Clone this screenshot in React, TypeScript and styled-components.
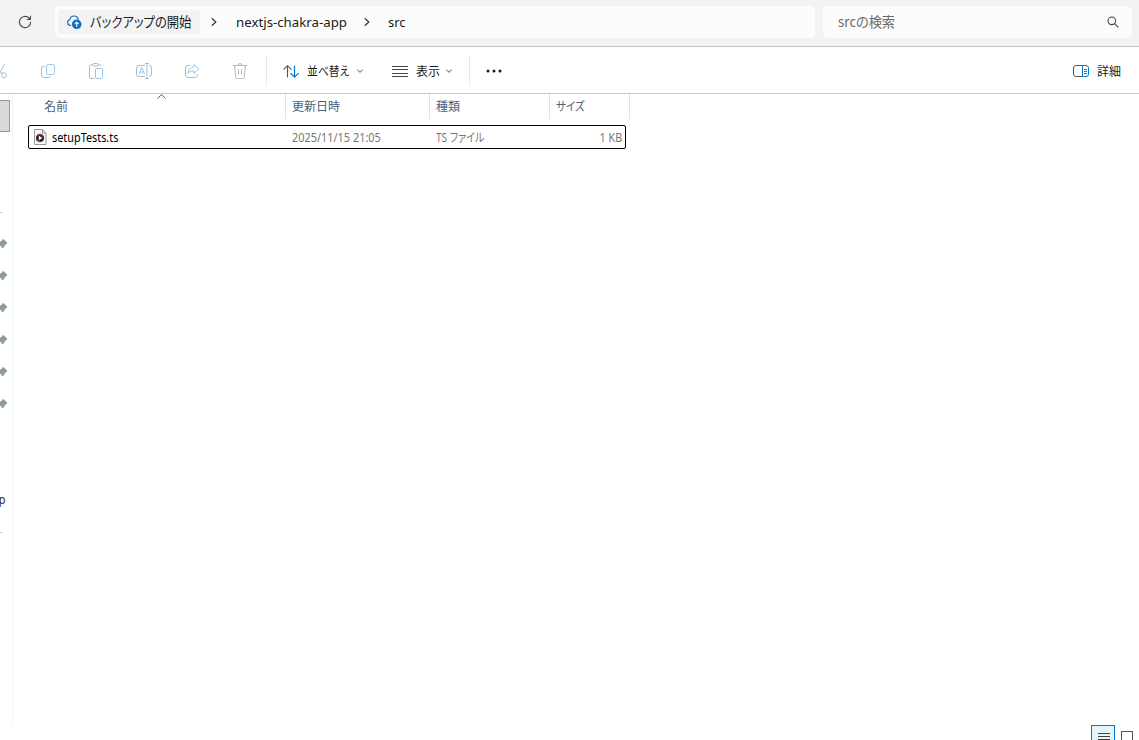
import React from "react";
import styled, { createGlobalStyle } from "styled-components";

const Global = createGlobalStyle`
  * { box-sizing: border-box; }
  body { margin: 0; background: #fff; overflow: hidden; }
  svg { display: block; flex: none; overflow: visible; }
`;

const Window = styled.div`
  width: 1139px;
  height: 740px;
  display: flex;
  flex-direction: column;
  overflow: hidden;
  background: #fff;
  color: #1b1b1b;
  font-family: "Noto Sans", "Noto Sans CJK JP", sans-serif;
  font-size: 12px;
`;

const Text = styled.span<{ $size?: number; $color?: string; $track?: number; $stretch?: number; $kana?: boolean; $end?: boolean }>`
  display: inline-block;
  white-space: nowrap;
  line-height: 20px;
  font-size: ${(p) => p.$size ?? 12}px;
  color: ${(p) => p.$color ?? "#1b1b1b"};
  letter-spacing: ${(p) => p.$track ?? 0}px;
  transform: scaleX(${(p) => p.$stretch ?? 1});
  transform-origin: ${(p) => (p.$end ? "right" : "left")} center;
  font-feature-settings: ${(p) => (p.$kana ? '"palt"' : "normal")};
`;

const AddressBar = styled.header`
  height: 47px;
  flex: none;
  display: flex;
  align-items: flex-start;
  padding: 6px 7px 0 0;
  background: #f3f3f3;
  border-bottom: 1px solid #c8c8c8;
`;

const RefreshButton = styled.div`
  width: 55px;
  height: 32px;
  padding: 9px 0 0 18px;
`;

const Field = styled.div<{ $width: number }>`
  width: ${(p) => p.$width}px;
  height: 32px;
  display: flex;
  align-items: center;
  border-radius: 5px;
  background: #fcfcfc;
`;

const Path = styled(Field)`
  margin-right: 8px;
  padding-left: 3px;
`;

const Search = styled(Field)`
  justify-content: space-between;
  padding: 0 13px 0 15px;
`;

const Chip = styled.div`
  width: 142px;
  height: 24px;
  display: flex;
  align-items: center;
  gap: 8px;
  padding-left: 8px;
  border-radius: 4px;
  background: #f3f3f3;
`;

const Crumb = styled.div<{ $width: number }>`
  width: ${(p) => p.$width}px;
  display: flex;
`;

const CrumbArrow = styled.div<{ $width: number }>`
  width: ${(p) => p.$width}px;
  padding-left: 11px;
`;

const Toolbar = styled.div`
  height: 47px;
  flex: none;
  display: flex;
  align-items: center;
  border-bottom: 1px solid #c8c8c8;
`;

const ToolIcons = styled.div`
  display: flex;
  align-items: center;
  gap: 32px;
  margin-left: -8px;
  padding-top: 2px;
  width: 274px;
`;

const Divider = styled.div`
  width: 1px;
  height: 31px;
  background: #e8e8e8;
`;

const MenuButton = styled.div<{ $left: number; $width: number }>`
  display: flex;
  align-items: center;
  margin-left: ${(p) => p.$left}px;
  width: ${(p) => p.$width}px;
  padding-top: 2px;
`;

const MenuLabel = styled.div<{ $width: number }>`
  width: ${(p) => p.$width}px;
  margin-left: 8px;
  padding-top: 2px;
  margin-bottom: 0;
  display: flex;
`;

const Details = styled.div`
  display: flex;
  align-items: center;
  gap: 8px;
  margin-left: auto;
  padding: 2px 18px 0 0;
`;

const DetailsLabel = styled.div`
  display: flex;
  padding-top: 2px;
`;

const Body = styled.div`
  flex: 1;
  display: flex;
  min-height: 0;
`;

const Sidebar = styled.nav`
  width: 13px;
  height: 630px;
  flex: none;
  overflow: hidden;
  padding-top: 6px;
  border-right: 1px solid #f3f3f3;
`;

const SelectedEntry = styled.div`
  width: 10px;
  height: 32px;
  margin-bottom: 80px;
  background: #d9d9d9;
  border: 1px solid #999;
  border-left: 0;
`;

const Rule = styled.div`
  width: 2px;
  height: 1px;
  background: #c9c9c9;
`;

const Pins = styled.div`
  display: flex;
  flex-direction: column;
  gap: 22px;
  padding: 26px 0 81px;
`;

const EntryTail = styled.div`
  display: flex;
  justify-content: flex-end;
  width: 5px;
  height: 20px;
  margin-bottom: 22px;
`;

const Files = styled.main`
  flex: 1;
  display: flex;
  flex-direction: column;
  padding-left: 15px;
`;

const HeaderRow = styled.div`
  height: 25px;
  display: flex;
  margin-bottom: 6px;
`;

const HeaderCell = styled.div<{ $width: number; $pad: number }>`
  position: relative;
  width: ${(p) => p.$width}px;
  padding: 3px 0 0 ${(p) => p.$pad}px;
  border-right: 1px solid #e3e3e3;
`;

const SortMark = styled.div`
  position: absolute;
  top: 0;
  left: 129px;
`;

const FileRow = styled.div`
  width: 598px;
  height: 24px;
  display: flex;
  align-items: center;
  border: 1px solid #000;
  border-radius: 2px;
`;

const NameCell = styled.div`
  width: 263px;
  display: flex;
  align-items: center;
  gap: 5px;
  padding-left: 5px;
`;

const FileName = styled.div`
  display: flex;
  padding-top: 2px;
`;

const DataCell = styled.div<{ $width: number; $right?: boolean }>`
  width: ${(p) => p.$width}px;
  display: flex;
  padding-top: 2px;
  justify-content: ${(p) => (p.$right ? "flex-end" : "flex-start")};
`;

const ViewSwitch = styled.div`
  display: flex;
  justify-content: flex-end;
  align-items: flex-start;
  gap: 6px;
  height: 15px;
  margin-top: auto;
  padding-right: 6px;
`;

const ListView = styled.div`
  width: 24px;
  height: 24px;
  padding: 7px 0 0 6px;
  background: #e5f3fb;
  border: 1px solid #0078d7;
`;

const IconView = styled.div`
  width: 12px;
  height: 12px;
  margin-top: 6px;
  border: 1px solid #555;
`;

const GREY = "#b9b9b9";
const BLUE = "#91c8f0";

const Tool = ({ children }: { children: React.ReactNode }) => (
  <svg width="16" height="16" viewBox="0 0 16 16" fill="none" stroke={GREY}>{children}</svg>
);

const Chevron = () => (
  <svg width="6" height="10" viewBox="0 0 6 10" fill="none" stroke="#333" strokeWidth="1.2"><path d="M.8 1.2 4.8 5 .8 8.8" /></svg>
);

const Caret = () => (
  <svg width="6" height="4" viewBox="0 0 6 4" fill="none" stroke="#8a8a8a" strokeWidth="1.1"><path d="m.3.6 2.7 2.6L5.7.6" /></svg>
);

const Pin = () => (
  <svg width="8" height="10" viewBox="0 0 8 10"><path d="M0 2.7 2 1.5 2.7.2h1.1L7 3.5v1.2L5 5.8 4 8.2l-1 1.2L0 6.5z" fill="#8d9aa3" /></svg>
);

export default function App() {
  return (
    <Window>
      <Global />
      <AddressBar>
        <RefreshButton>
          <svg width="14" height="14" viewBox="0 0 14 14" fill="none" stroke="#444" strokeWidth="1.1">
            <path d="M12.6 6.8A5.6 5.6 0 1 1 10.9 3L12.4 4.4M12.4.8v3.7H8.8" />
          </svg>
        </RefreshButton>
        <Path $width={760}>
          <Chip>
            <svg width="16" height="16" viewBox="0 0 16 16" fill="none">
              <path d="M5 11.3H3.6A3 3 0 0 1 3.7 5.6C4.3 3.3 6 2 8 2c2.4 0 3.9 1.5 4.3 3.6" stroke="#0f6cbd" strokeWidth="1.2" />
              <circle cx="10.7" cy="10.3" r="4.8" fill="#0f6cbd" />
              <path d="M10.7 13V8m-2 2 2-2 2 2" stroke="#d8ecff" strokeWidth="1.2" />
            </svg>
            <Text $size={14} $kana $stretch={0.88}>バックアップの開始</Text>
          </Chip>
          <CrumbArrow $width={36}><Chevron /></CrumbArrow>
          <Crumb $width={117}><Text $size={13} $stretch={1.02}>nextjs-chakra-app</Text></Crumb>
          <CrumbArrow $width={35}><Chevron /></CrumbArrow>
          <Text $size={13}>src</Text>
        </Path>
        <Search $width={309}>
          <Text $size={14} $kana $color="#6a6a6a" $stretch={0.945}>srcの検索</Text>
          <svg width="12" height="12" viewBox="0 0 12 12" fill="none" stroke="#444" strokeWidth="1.1">
            <circle cx="4.8" cy="4.8" r="3.8" /><path d="m7.6 7.6 3.7 3.7" />
          </svg>
        </Search>
      </AddressBar>

      <Toolbar>
        <ToolIcons>
          <Tool>
            <path d="M13 .5 7.8 10M3 .5 10 11" /><circle cx="12" cy="12.2" r="2.5" stroke={BLUE} />
          </Tool>
          <Tool>
            <path d="M4.5 3.5H3A2 2 0 0 0 1.5 5.4v6.1a3 3 0 0 0 3 3h4a2 2 0 0 0 1.9-1.5" /><rect x="6.5" y="1.5" width="8" height="10" rx="2" stroke={BLUE} />
          </Tool>
          <Tool>
            <path d="M5 1.8H3a1.5 1.5 0 0 0-1.5 1.5V14A1.5 1.5 0 0 0 3 15.5h3.5M10 1.8h1.5A1.5 1.5 0 0 1 13 3.3" /><rect x="4.7" y=".5" width="5.6" height="2.6" rx="1.3" /><rect x="7.5" y="5.5" width="7" height="10" rx="1.2" stroke={BLUE} />
          </Tool>
          <Tool>
            <path d="M9 2.5H3A2.5 2.5 0 0 0 .5 5v6A2.5 2.5 0 0 0 3 13.5h6M13 2.5A2.5 2.5 0 0 1 15.5 5v6a2.5 2.5 0 0 1-2.5 2.5" /><path d="M3 11 5.8 4.5 8.6 11M4 9h3.6M9 .5h4M11 .5v15M9 15.5h4" stroke={BLUE} />
          </Tool>
          <Tool>
            <path d="M6.5 2.5H4A2.5 2.5 0 0 0 1.5 5v7A2.5 2.5 0 0 0 4 14.5h7a2.5 2.5 0 0 0 2.5-2.5v-1" /><path d="M10 1.5 14.8 6 10 10.5V8C7 7.8 5.3 8.7 4 10.5 4.3 6.5 6.5 4.2 10 4z" stroke={BLUE} strokeLinejoin="round" />
          </Tool>
          <Tool>
            <path d="M1 2.5h14M6 2.5a2 2 0 0 1 4 0M2.5 2.5l1.2 11.5A1.7 1.7 0 0 0 5.4 15.5h5.2a1.7 1.7 0 0 0 1.7-1.5l1.2-11.5M6.5 6.5v5M9.5 6.5v5" />
          </Tool>
        </ToolIcons>
        <Divider />
        <MenuButton $left={16} $width={109}>
          <svg width="16" height="13" viewBox="0 0 16 13" fill="none">
            <path d="M4.5 12.5V.8M.5 4.7 4.5.7l4 4" stroke="#555" strokeWidth="1.1" />
            <path d="M11.5.5v11.7m-4-4 4 4 4-4" stroke="#0078d4" strokeWidth="1.2" />
          </svg>
          <MenuLabel $width={50}><Text $kana $stretch={0.9}>並べ替え</Text></MenuLabel>
          <Caret />
        </MenuButton>
        <MenuButton $left={0} $width={77}>
          <svg width="16" height="11" viewBox="0 0 16 11" stroke="#444"><path d="M0 .5h16M0 3.5h16M0 7.5h16M0 10.5h16" /></svg>
          <MenuLabel $width={30}><Text>表示</Text></MenuLabel>
          <Caret />
        </MenuButton>
        <Divider />
        <MenuButton $left={16} $width={16}>
          <svg width="16" height="4" viewBox="0 0 16 4" fill="#1b1b1b"><circle cx="2" cy="2" r="1.5" /><circle cx="8" cy="2" r="1.5" /><circle cx="14" cy="2" r="1.5" /></svg>
        </MenuButton>
        <Details>
          <svg width="16" height="12" viewBox="0 0 16 12" fill="none">
            <path d="M9.5.5H3A2.5 2.5 0 0 0 .5 3v6A2.5 2.5 0 0 0 3 11.5h6.5" stroke="#555" />
            <path d="M9.5.5H13A2.5 2.5 0 0 1 15.5 3v6a2.5 2.5 0 0 1-2.5 2.5H9.5zM11 4.5h3M11 6.5h3M11 8.5h3" stroke="#0078d4" />
          </svg>
          <DetailsLabel><Text>詳細</Text></DetailsLabel>
        </Details>
      </Toolbar>

      <Body>
        <Sidebar>
          <SelectedEntry />
          <Rule />
          <Pins>{[0, 1, 2, 3, 4, 5].map((i) => <Pin key={i} />)}</Pins>
          <EntryTail><Text $color="#222" $stretch={0.9} $end>p</Text></EntryTail>
          <Rule />
        </Sidebar>
        <Files>
          <HeaderRow>
            <HeaderCell $width={258} $pad={16}>
              <Text $color="#4c607a">名前</Text>
              <SortMark><svg width="9" height="5" viewBox="0 0 9 5" fill="none" stroke="#555"><path d="M.6 4.5 4.5.6l3.9 3.9" /></svg></SortMark>
            </HeaderCell>
            <HeaderCell $width={144} $pad={6}><Text $color="#4c607a">更新日時</Text></HeaderCell>
            <HeaderCell $width={120} $pad={6}><Text $color="#4c607a">種類</Text></HeaderCell>
            <HeaderCell $width={80} $pad={6}><Text $kana $color="#4c607a" $stretch={0.88}>サイズ</Text></HeaderCell>
          </HeaderRow>
          <FileRow>
            <NameCell>
              <svg width="13" height="16" viewBox="0 0 13 16">
                <path d="M.5.5h8l3.5 3.5v11.5H.5z" fill="#f8f8f8" stroke="#999" /><path d="M8.5.5V4H12" fill="none" stroke="#999" />
                <circle cx="6" cy="9" r="4" fill="#27203c" /><path d="M3.2 6.2A4 4 0 0 1 8.8 6.2M2.6 11a4 4 0 0 0 3.4 2" fill="none" stroke="#e37236" strokeWidth="1.2" /><path d="M4.8 6.8v4.4L8.4 9z" fill="#fff" />
              </svg>
              <FileName><Text $color="#000" $stretch={0.905}>setupTests.ts</Text></FileName>
            </NameCell>
            <DataCell $width={144}><Text $color="#777" $stretch={0.91}>2025/11/15 21:05</Text></DataCell>
            <DataCell $width={120}><Text $kana $color="#777" $stretch={0.835}>TS ファイル</Text></DataCell>
            <DataCell $width={66} $right><Text $color="#777" $stretch={0.9} $end>1 KB</Text></DataCell>
          </FileRow>
          <ViewSwitch>
            <ListView><svg width="12" height="8" viewBox="0 0 12 8" stroke="#444"><path d="M0 .5h12M0 3.5h12M0 6.5h12" /></svg></ListView>
            <IconView />
          </ViewSwitch>
        </Files>
      </Body>
    </Window>
  );
}
